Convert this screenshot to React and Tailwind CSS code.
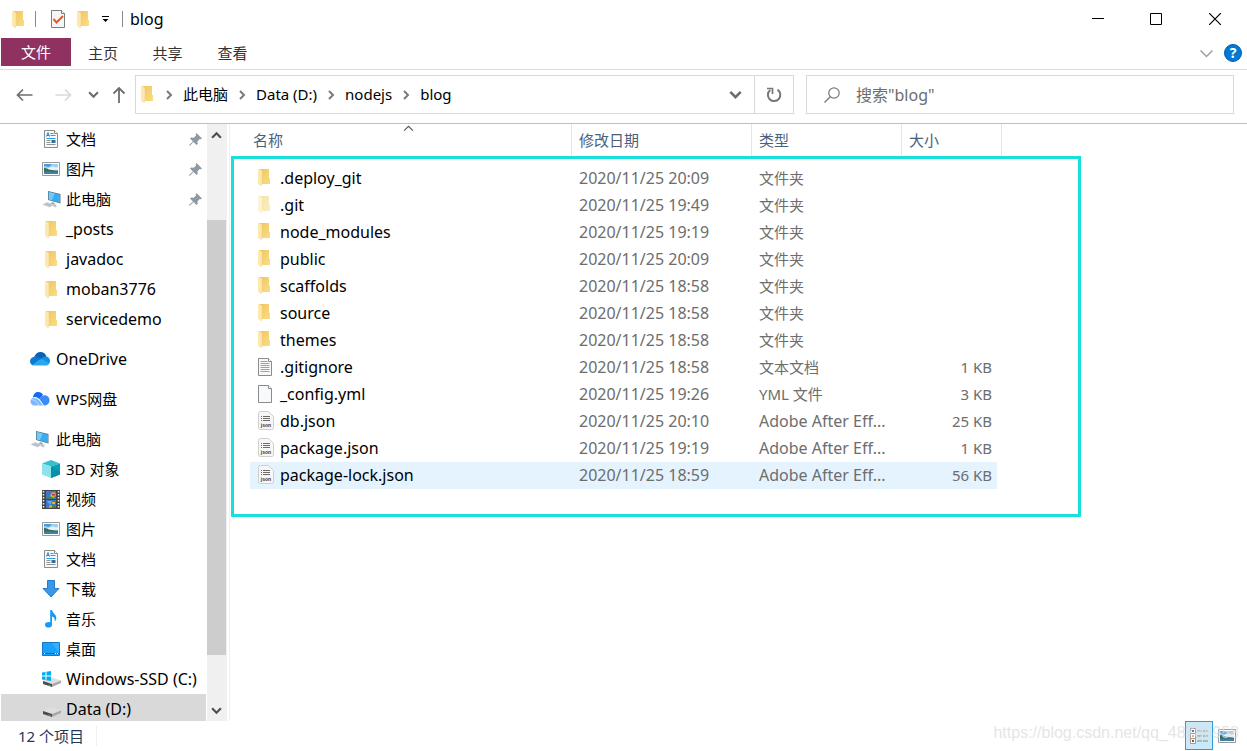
import { useState } from 'react';

const quickAccess = [
  { name: '文档', icon: 'document', pinned: true },
  { name: '图片', icon: 'picture', pinned: true },
  { name: '此电脑', icon: 'pc', pinned: true },
  { name: '_posts', icon: 'folder' },
  { name: 'javadoc', icon: 'folder' },
  { name: 'moban3776', icon: 'folder' },
  { name: 'servicedemo', icon: 'folder' },
];

const thisPc = [
  { name: '3D 对象', icon: 'cube' },
  { name: '视频', icon: 'video' },
  { name: '图片', icon: 'picture' },
  { name: '文档', icon: 'document' },
  { name: '下载', icon: 'download' },
  { name: '音乐', icon: 'music' },
  { name: '桌面', icon: 'desktop' },
  { name: 'Windows-SSD (C:)', icon: 'windrive' },
  { name: 'Data (D:)', icon: 'drive', selected: true },
];

const files = [
  { name: '.deploy_git', date: '2020/11/25 20:09', type: '文件夹', size: '', icon: 'folder' },
  { name: '.git', date: '2020/11/25 19:49', type: '文件夹', size: '', icon: 'folder', hidden: true },
  { name: 'node_modules', date: '2020/11/25 19:19', type: '文件夹', size: '', icon: 'folder' },
  { name: 'public', date: '2020/11/25 20:09', type: '文件夹', size: '', icon: 'folder' },
  { name: 'scaffolds', date: '2020/11/25 18:58', type: '文件夹', size: '', icon: 'folder' },
  { name: 'source', date: '2020/11/25 18:58', type: '文件夹', size: '', icon: 'folder' },
  { name: 'themes', date: '2020/11/25 18:58', type: '文件夹', size: '', icon: 'folder' },
  { name: '.gitignore', date: '2020/11/25 18:58', type: '文本文档', size: '1 KB', icon: 'text' },
  { name: '_config.yml', date: '2020/11/25 19:26', type: 'YML 文件', size: '3 KB', icon: 'blank' },
  { name: 'db.json', date: '2020/11/25 20:10', type: 'Adobe After Eff...', size: '25 KB', icon: 'json' },
  { name: 'package.json', date: '2020/11/25 19:19', type: 'Adobe After Eff...', size: '1 KB', icon: 'json' },
  { name: 'package-lock.json', date: '2020/11/25 18:59', type: 'Adobe After Eff...', size: '56 KB', icon: 'json' },
];

const textSize = (text) => (/[\u4e00-\u9fa5]/.test(text) ? 'text-[15px]' : 'text-base');

function FolderIcon({ className = '' }) {
  return (
    <svg width="12" height="17" viewBox="0 0 12 17" className={`shrink-0 ${className}`}>
      <defs>
        <linearGradient id="folderBody" x1="0" y1="0" x2="1" y2="1">
          <stop offset="0" stopColor="#eec561" />
          <stop offset="1" stopColor="#fbdd83" />
        </linearGradient>
      </defs>
      <path d="M1 0h10v9h1v6H1z" fill="url(#folderBody)" />
      <path d="M0 0.5l1-.5 3 2v12.500l-1 2.500L0 15z" fill="#fde9ae" />
      <path d="M4 2v12.500l-1 2.500" fill="none" stroke="#f3d27c" strokeWidth=".6" />
    </svg>
  );
}

function Drive({ windows }) {
  return (
    <svg width="19" height="16" viewBox="0 0 19 16" className="shrink-0">
      <path d="M1 10l7-4 11 3.500-9 3.500z" fill="#dedede" />
      <path d="M1 10l9 3v3l-9-3z" fill="#4b4b4b" />
      <path d="M10 13l9-3.500v2.500l-9 4z" fill="#a9a9a9" />
      <path d="M6.500 13.200l2 .7v1l-2-.7z" fill="#4fc04f" />
      {windows && (
        <g fill="#00adef">
          <path d="M0 1.500l3.500-.5v3.500H0zM4.500.8L9 0v4.500H4.500zM0 5.500h3.500V9L0 8.500zM4.500 5.500H9V10l-4.500-.8z" />
        </g>
      )}
    </svg>
  );
}

function Page({ children }) {
  return (
    <svg width="14" height="18" viewBox="0 0 14 18" className="shrink-0">
      <path d="M.5.5h10l3 3v14H.5z" fill="#f8f9fa" stroke="#8b8b8b" />
      <path d="M10.500.5v3h3" fill="#fff" stroke="#8b8b8b" />
      {children}
    </svg>
  );
}

function Icon({ name, className }) {
  switch (name) {
    case 'folder':
      return <FolderIcon className={className} />;
    case 'document':
      return (
        <Page>
          <path d="M2.500 6.500l1.500-4 1.500 4M3 5.500h2" fill="none" stroke="#1f8ad0" />
          <path d="M6.500 3.500h3M6.500 5.500h5" stroke="#2d9be0" />
          <path d="M2.500 8.500h9" stroke="#2d9be0" />
          <path d="M2.500 10.500h4M2.500 12.500h4M2.500 14.500h9" stroke="#8f9499" />
          <path d="M7.500 10h4v3h-4z" fill="#336f9e" />
        </Page>
      );
    case 'picture':
      return (
        <svg width="18" height="14" viewBox="0 0 18 14" className="shrink-0">
          <path d="M.5.5h17v13H.5z" fill="#fff" stroke="#999" />
          <path d="M2 2h14v10H2z" fill="#9fd0f3" />
          <path d="M2 2h8L7 5 2 4z" fill="#4c9cdb" />
          <path d="M6 6l5-1.500 3 1 2-.5v3H6z" fill="#e5f4fb" />
          <path d="M2 6c3 0 4 2.500 14 2.500V10H2z" fill="#3d6b50" />
          <path d="M2 9.500h14V12H2z" fill="#3f7fab" />
        </svg>
      );
    case 'pc':
      return (
        <svg width="19" height="17" viewBox="0 0 19 17" className="shrink-0">
          <path d="M6 0l12.500 3v9.500L6 9z" fill="#5f7688" />
          <path d="M6.800 1L18 3.700v8L6.800 8.500z" fill="#38adf1" />
          <path d="M6.800 1l6 1.500-3 6.800-3-.8z" fill="#74c9f8" />
          <path d="M10 11l3 1-1 1.500 3 .5-2 1-5-1.500z" fill="#9aa7b1" />
          <path d="M0 13.500l5-2.500 7 2.500-4.500 3z" fill="#d5dbe0" />
          <path d="M2 13.300l7 2M4 12.300l6.500 2" stroke="#9ba5ad" strokeWidth=".7" />
          <path d="M11 15.500l2-.8 2 .8-2 1z" fill="#c7ced4" />
        </svg>
      );
    case 'onedrive':
      return (
        <svg width="20" height="14" viewBox="0 0 20 14" className="shrink-0">
          <path d="M4 5.500C5 2 7.500 0 10.500 0c3 0 5.200 1.800 6 4.500L10 9z" fill="#0a61b8" />
          <path d="M4.500 4.700C7 4.300 9 5.300 11 7L3 13.300C1 12.700 0 11 0 9.200 0 6.800 2 4.800 4.500 4.700z" fill="#0f79d3" />
          <path d="M16.300 4.500C18.500 4.700 20 6.500 20 9c0 1-.3 2-1 2.800L10.500 7c1.500-1.700 3.500-2.600 5.800-2.500z" fill="#1490df" />
          <path d="M2.500 13L11 6.700l8.300 4.800C18.700 13 17.500 13.500 16 13.500H4.500c-.8 0-1.500-.1-2-.5z" fill="#28a8ea" />
        </svg>
      );
    case 'wps':
      return (
        <svg width="20" height="14" viewBox="0 0 20 14" className="shrink-0">
          <path d="M3 5.500C3.300 2 5.500 0 8.300 0c2 0 3.700 1 4.700 2.800L9.500 7 6 5z" fill="#1769f0" />
          <path d="M9.500 7C11 4.500 12.500 3.200 14.500 3.200c3 0 5 2.300 5 5 0 3-2 5.200-5 5.200h-1z" fill="#3b8bfa" />
          <path d="M4.500 5.500C2 5.500.5 7.500.5 9.500c0 2.300 1.700 4 4 4H13L9.500 8.300C8.300 6.500 6.500 5.500 4.500 5.500z" fill="#7bb8fd" />
          <path d="M3.500 5.700c4-.3 6 2.300 10 7.800" fill="none" stroke="#fff" strokeWidth=".8" />
          <path d="M1.500 7.500C5.500 7.500 7 10 9 13.300" fill="none" stroke="#fff" strokeWidth=".5" />
        </svg>
      );
    case 'cube':
      return (
        <svg width="18" height="18" viewBox="0 0 18 18" className="shrink-0">
          <path d="M0 3.500L9 0l9 3.500-9 3z" fill="#35bfcf" />
          <path d="M0 3.500l9 3V18l-9-3.500z" fill="#8be3ec" />
          <path d="M18 3.500l-9 3V18l9-3.500z" fill="#08a0b4" />
          <path d="M9 6.500l9 5v3L9 18z" fill="#0b8fa5" />
        </svg>
      );
    case 'video':
      return (
        <svg width="18" height="19" viewBox="0 0 18 19" className="shrink-0">
          <path d="M0 0h18v19H0z" fill="#444" />
          <path d="M4 1h10v8H4zM4 10h10v8H4z" fill="#3a78d4" />
          <path d="M8 6l2-3.500h3l1 3-3 2.500z" fill="#d9b32b" />
          <path d="M10 4h3v1.500h-3z" fill="#c33527" />
          <path d="M4 7.500h7V9H4zM9 16h5v2H9z" fill="#49843a" />
          <path d="M5 11h5l-2 4z" fill="#65a8eb" />
          <path d="M10 12h3v2h-3zM7 15.500h3v2H7z" fill="#e2b52c" />
          <path d="M1.500 1v18M16.500 1v18" stroke="#eee" strokeWidth="1.500" strokeDasharray="1.500 1.500" />
        </svg>
      );
    case 'download':
      return (
        <svg width="18" height="18" viewBox="0 0 18 18" className="shrink-0">
          <path d="M5.500.5h7v8h4.500L9 17 1 8.500h4.500z" fill="#3b97e8" stroke="#2a7bc8" />
        </svg>
      );
    case 'music':
      return (
        <svg width="12" height="18" viewBox="0 0 12 18" className="shrink-0">
          <ellipse cx="3.500" cy="14.800" rx="3.500" ry="2.800" fill="#159bf5" />
          <path d="M5.200 0H7c.3 3 4.800 4.500 4.300 8.500-.2 1.200-.8 2.200-1.500 3C10 8.500 9 7 7 6.500V15H5.200z" fill="#159bf5" />
        </svg>
      );
    case 'desktop':
      return (
        <svg width="18" height="14" viewBox="0 0 18 14" className="shrink-0">
          <path d="M.5.5h17v13H.5z" fill="#1ba1f8" stroke="#1579c4" />
          <path d="M10 1h7v10z" fill="#36b0fb" />
          <path d="M1 11.500h16" stroke="#0e6fb8" />
          <path d="M2 11.500h2M13 11.500h3" stroke="#e7f5ff" strokeDasharray="1 1" />
        </svg>
      );
    case 'windrive':
      return <Drive windows />;
    case 'drive':
      return <Drive />;
    case 'text':
      return (
        <Page>
          <path d="M2.500 3.500h7M2.500 5.500h9M2.500 7.500h9M2.500 9.500h9M2.500 11.500h9M2.500 13.500h9" stroke="#a0a0a0" />
        </Page>
      );
    case 'blank':
      return <Page />;
    case 'json':
      return (
        <svg width="16" height="19" viewBox="0 0 16 19" className="shrink-0">
          <path d="M2.500.5h8l5 5v11a2 2 0 0 1-2 2h-11a2 2 0 0 1-2-2v-14a2 2 0 0 1 2-2z" fill="#f6f6f6" stroke="#cfcfcf" />
          <path d="M3 5.500h1M3 7.500h1M3 9.500h1M5 5.500h7M5 7.500h7M5 9.500h7" stroke="#6b6b6b" />
          <text x="8" y="16" textAnchor="middle" fontSize="5" fontWeight="bold" fill="#333" fontFamily="Liberation Sans, sans-serif">
            json
          </text>
        </svg>
      );
    default:
      return null;
  }
}

function Chevron({ dir = 'down', size = 10, color = '#6d6d6d', width = 2 }) {
  const paths = {
    down: 'M1 3l4 4 4-4',
    up: 'M1 7l4-4 4 4',
    right: 'M3 1l4 4-4 4',
  };
  return (
    <svg width={size} height={size} viewBox="0 0 10 10" className="shrink-0">
      <path d={paths[dir]} fill="none" stroke={color} strokeWidth={width} />
    </svg>
  );
}

function PinIcon() {
  return (
    <svg width="13" height="13" viewBox="0 0 13 13" className="shrink-0">
      <path d="M7.500 0l5.500 5.500-1.200.8-1-.3-2.300 2.300.2 2.700-1.200 1L4.500 9 .8 12.700l-.8-.2.300-.8L4 8.500 1 5.500l1.200-1 2.600.2L7 2.500l-.3-1.200z" fill="#8e99a3" />
    </svg>
  );
}

function NavItem({ item, root }) {
  return (
    <a
      href="#"
      className={`flex h-[30px] shrink-0 items-center whitespace-nowrap text-black ${root ? 'pl-[29px]' : 'pl-[39px]'} ${
        item.selected ? 'bg-[#d9d9d9]' : ''
      } ${textSize(item.name)}`}
    >
      <span className={`flex w-[26px] ${root ? '' : 'justify-center pr-1'}`}>
        <Icon name={item.icon} />
      </span>
      {item.name}
      {item.pinned && (
        <span className="mr-1 ml-auto">
          <PinIcon />
        </span>
      )}
    </a>
  );
}

function TitleBar() {
  return (
    <header className="flex h-[38px] shrink-0 items-center pl-3">
      <FolderIcon />
      <span className="ml-[11px] h-4 w-px bg-[#8a8a8a]" />
      <button type="button" aria-label="属性" className="ml-[15px]">
        <svg width="14" height="18" viewBox="0 0 14 18">
          <path d="M.5.5h10l3 3v14H.5z" fill="#f3f5f8" stroke="#7d7d7d" />
          <path d="M10.500.5v3h3" fill="#fff" stroke="#7d7d7d" />
          <path d="M2.500 9l3 3.500L12 6" fill="none" stroke="#f0561d" strokeWidth="2" />
        </svg>
      </button>
      <button type="button" aria-label="新建文件夹" className="ml-3">
        <FolderIcon />
      </button>
      <button type="button" aria-label="自定义快速访问工具栏" className="ml-3">
        <svg width="9" height="8" viewBox="0 0 9 8">
          <path d="M1 1.500h7" stroke="#000" />
          <path d="M1.500 4h6l-3 3z" fill="#000" />
        </svg>
      </button>
      <span className="ml-3 h-4 w-px bg-[#8a8a8a]" />
      <h1 className="ml-[7px] text-base text-black">blog</h1>
      <div className="mr-0.5 ml-auto flex h-full">
        <button type="button" aria-label="最小化" className="flex w-[58px] items-center justify-center">
          <svg width="12" height="12" viewBox="0 0 12 12">
            <path d="M0 5.500h12" stroke="#000" />
          </svg>
        </button>
        <button type="button" aria-label="最大化" className="flex w-[58px] items-center justify-center">
          <svg width="12" height="12" viewBox="0 0 12 12">
            <path d="M.5.5h11v11H.5z" fill="none" stroke="#000" />
          </svg>
        </button>
        <button type="button" aria-label="关闭" className="flex w-[60px] items-center justify-center">
          <svg width="12" height="12" viewBox="0 0 12 12">
            <path d="M0 0l12 12M12 0L0 12" stroke="#000" strokeWidth="1.200" />
          </svg>
        </button>
      </div>
    </header>
  );
}

function Ribbon() {
  return (
    <nav className="flex h-8 shrink-0 items-start border-b border-[#dadbdc] pl-px text-[15px] text-[#333]">
      <button type="button" className="h-7 w-[70px] bg-[#8f3161] text-white">文件</button>
      <button type="button" className="h-[30px] w-16">主页</button>
      <button type="button" className="h-[30px] w-[65px]">共享</button>
      <button type="button" className="h-[30px] w-[65px]">查看</button>
      <button type="button" aria-label="展开功能区" className="ml-auto flex h-[30px] items-center">
        <Chevron size={15} color="#a0a0a0" width={1} />
      </button>
      <button type="button" aria-label="帮助" className="mt-[6px] mr-[5px] ml-2.5 h-[18px] w-[18px] rounded-full border border-[#0a5ea8] bg-[#0078d7] text-sm leading-4 font-bold text-white">
        ?
      </button>
    </nav>
  );
}

function AddressRow() {
  const [query, setQuery] = useState('');
  const crumbs = ['此电脑', 'Data (D:)', 'nodejs', 'blog'];

  return (
    <div className="flex h-[54px] shrink-0 items-center border-b border-[#bfbfbf] pr-[13px] pb-1 pl-4">
      <button type="button" aria-label="后退">
        <svg width="17" height="16" viewBox="0 0 17 16">
          <path d="M1.500 8H16.500M7 2.500L1.500 8 7 13.500" fill="none" stroke="#6e6e6e" strokeWidth="1.700" />
        </svg>
      </button>
      <button type="button" aria-label="前进" className="ml-[22px]">
        <svg width="17" height="16" viewBox="0 0 17 16">
          <path d="M.5 8H15.500M10 2.500L15.500 8 10 13.500" fill="none" stroke="#d9d9d9" strokeWidth="1.700" />
        </svg>
      </button>
      <button type="button" aria-label="最近浏览的位置" className="ml-4">
        <Chevron size={11} />
      </button>
      <button type="button" aria-label="上移" className="ml-[13px]">
        <svg width="14" height="18" viewBox="0 0 14 18">
          <path d="M7 2v15M1.500 7.500L7 2l5.500 5.500" fill="none" stroke="#6e6e6e" strokeWidth="1.800" />
        </svg>
      </button>

      <div className="ml-[9px] flex h-[39px] min-w-0 flex-1 items-center border border-[#d9d9d9]">
        <span className="mr-0.5 ml-[5px]">
          <FolderIcon />
        </span>
        {crumbs.map((crumb) => (
          <span key={crumb} className="flex items-center">
            <span className="flex w-7 justify-center">
              <Chevron dir="right" color="#7a7a7a" />
            </span>
            <a href="#" className="text-[15px] text-black">{crumb}</a>
          </span>
        ))}
        <button type="button" aria-label="以前的位置" className="mr-3 ml-auto">
          <Chevron size={13} />
        </button>
        <button type="button" aria-label="刷新" className="flex h-full w-[39px] items-center justify-center border-l border-[#d9d9d9]">
          <svg width="16" height="16" viewBox="0 0 16 16">
            <path d="M11.500 2.700A6.200 6.200 0 1 1 4.300 3" fill="none" stroke="#777" strokeWidth="2" />
            <path d="M1 1.500h5.500V7" fill="none" stroke="#777" strokeWidth="1.700" />
          </svg>
        </button>
      </div>

      <label className="ml-3 flex h-[39px] w-[428px] items-center border border-[#d9d9d9] pl-[17px]">
        <svg width="16" height="16" viewBox="0 0 16 16" className="shrink-0">
          <circle cx="10" cy="6" r="5.200" fill="none" stroke="#777" strokeWidth="1.200" />
          <path d="M6.300 9.700L.5 15.500" stroke="#777" strokeWidth="1.300" />
        </svg>
        <input
          type="text"
          aria-label="搜索"
          value={query}
          onChange={(e) => setQuery(e.target.value)}
          placeholder={'搜索"blog"'}
          className="ml-4 min-w-0 flex-1 text-base outline-none placeholder:text-[#6d6d6d]"
        />
      </label>
    </div>
  );
}

function Sidebar() {
  return (
    <aside className="flex w-[230px] shrink-0 border-r border-[#f0f0f0] pr-[2px] pl-px">
      <nav className="flex min-w-0 flex-1 flex-col gap-2.5 overflow-hidden">
        <div>
          {quickAccess.map((item) => (
            <NavItem key={item.name} item={item} />
          ))}
        </div>
        <NavItem item={{ name: 'OneDrive', icon: 'onedrive' }} root />
        <NavItem item={{ name: 'WPS网盘', icon: 'wps' }} root />
        <div>
          <NavItem item={{ name: '此电脑', icon: 'pc' }} root />
          {thisPc.map((item) => (
            <NavItem key={item.name} item={item} />
          ))}
        </div>
      </nav>
      <div className="ml-px flex w-5 flex-col items-center bg-[#f0f0f0] pr-px">
        <button type="button" aria-label="向上滚动" className="flex h-[22px] items-center">
          <Chevron dir="up" size={11} color="#505050" />
        </button>
        <div className="flex w-full flex-1 flex-col">
          <div className="h-[74px]" />
          <div className="flex-1 bg-[#cdcdcd]" />
          <div className="h-11" />
        </div>
        <button type="button" aria-label="向下滚动" className="flex h-[22px] items-center">
          <Chevron size={11} color="#505050" />
        </button>
      </div>
    </aside>
  );
}

function FileTable() {
  const [active, setActive] = useState('package-lock.json');

  return (
    <main className="relative min-w-0 flex-1 overflow-hidden pl-5">
      <table className="w-[752px] table-fixed border-separate border-spacing-0 text-left">
        <colgroup>
          <col className="w-[322px]" />
          <col className="w-[180px]" />
          <col className="w-[150px]" />
          <col className="w-[95px]" />
          <col className="w-[5px]" />
        </colgroup>
        <thead className="text-[15px] text-[#4c607a]">
          <tr className="h-8">
            <th className="relative border-r border-[#e5e5e5] p-0 pl-[3px] font-normal">
              名称
              <span className="absolute top-0 left-[153px] flex h-2 items-center">
                <Chevron dir="up" size={11} color="#555" width={1} />
              </span>
            </th>
            <th className="border-r border-[#e5e5e5] p-0 pl-[7px] font-normal">修改日期</th>
            <th className="border-r border-[#e5e5e5] p-0 pl-[7px] font-normal">类型</th>
            <th colSpan={2} className="border-r border-[#e5e5e5] p-0 pl-[7px] font-normal">大小</th>
          </tr>
        </thead>
        <tbody className="text-[#6d6d6d]">
          <tr className="h-[9px]">
            <td colSpan={5} className="p-0" />
          </tr>
          {files.map((file) => {
            const bg = file.name === active ? 'bg-[#e5f3ff]' : '';
            return (
              <tr key={file.name} className="h-[27px]" onMouseEnter={() => setActive(file.name)}>
                <td className={`p-0 pl-[7px] ${bg}`}>
                  <span className="flex items-center text-base leading-[27px] text-black">
                    <span className="flex w-[23px] pb-0.5 pl-px">
                      <Icon name={file.icon} className={file.hidden ? 'opacity-50' : ''} />
                    </span>
                    {file.name}
                  </span>
                </td>
                <td className={`p-0 pl-[7px] text-base leading-[27px] ${bg}`}>{file.date}</td>
                <td className={`p-0 pl-[7px] leading-[27px] whitespace-nowrap ${textSize(file.type)} ${bg}`}>{file.type}</td>
                <td className={`p-0 pr-[5px] text-right text-[15px] leading-[27px] ${bg}`}>{file.size}</td>
                <td className="p-0" />
              </tr>
            );
          })}
        </tbody>
      </table>
      {/* highlight frame drawn over the list */}
      <div className="pointer-events-none absolute top-8 left-px h-[361px] w-[850px] border-[3px] border-[#18dfdc]" />
    </main>
  );
}

function StatusBar() {
  return (
    <footer className="relative flex h-[30px] shrink-0 items-center pr-[11px] pb-px pl-[18px]">
      <span className="border-r border-[#f0f0f0] pr-3 text-[15px] leading-5 text-[#1e395b]">12 个项目</span>
      <button type="button" aria-label="详细信息" className="ml-auto flex h-[29px] w-7 items-center justify-center border border-[#26a0da] bg-[#cbe8f6]">
        <svg width="18" height="16" viewBox="0 0 18 16">
          <path d="M.5.500h5v5h-5zM.5 5.500h5v5h-5zM.5 10.500h5v5h-5z" fill="#fff" stroke="#999" />
          <path d="M2 2h2v2H2z" fill="#3b82c4" />
          <path d="M2 7h2v2H2z" fill="#d9b95a" />
          <path d="M2 12h2v2H2z" fill="#c0392b" />
          <path d="M7 3h5M13 3h5M7 8h5M13 8h5M7 13h5M13 13h5" stroke="#888" />
        </svg>
      </button>
      <button type="button" aria-label="大图标" className="ml-[5px]">
        <Icon name="picture" />
      </button>
      <span className="pointer-events-none absolute right-2 bottom-2 font-['Liberation_Sans',sans-serif] text-base leading-5 text-[#dedede]/80">
        https://blog.csdn.net/qq_48786958
      </span>
    </footer>
  );
}

export default function App() {
  return (
    <div className="flex h-screen flex-col overflow-hidden bg-white font-['Noto_Sans','Noto_Sans_CJK_SC',sans-serif]">
      <TitleBar />
      <Ribbon />
      <AddressRow />
      <div className="flex min-h-0 flex-1">
        <Sidebar />
        <FileTable />
      </div>
      <StatusBar />
    </div>
  );
}
